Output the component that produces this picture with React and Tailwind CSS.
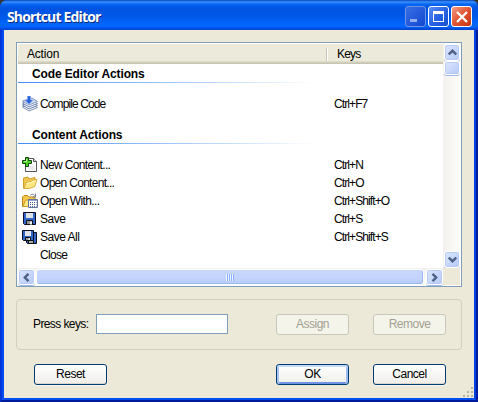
import React from 'react';

const Chevron = ({ className = '' }) => (
  <svg width="9" height="7" viewBox="0 0 9 7" className={className} fill="none" stroke="#4d6185" strokeWidth="2.4">
    <path d="M.8 5.5 4.5 1.8 8.2 5.5" />
  </svg>
);

const scrollBtn = 'flex shrink-0 items-center justify-center rounded-[3px] border border-white bg-linear-to-br from-[#dce6ff] to-[#b5c9f7] shadow-[inset_0_0_0_1px_#b9cbf3,0_1px_0_#9db9e8]';

const icons = {
  compile: (
    <>
      <path d="M.5 11 7 15 15.5 11.5 9 8z" fill="#fff" stroke="#7c8fb5" />
      <path d="M.5 9 7 13 15.5 9.5 9 6z" fill="#fff" stroke="#667da8" />
      <path d="M.5 7 7 11 15.5 7.5 9 4z" fill="#eef3fc" stroke="#7188b3" />
      <path d="M.5 5 7 9 15.5 5.5 10 2z" fill="#cbd8f0" stroke="#8b9dc2" />
      <path d="M5.5 0h3v4H11L7 8 3 4h2.5z" fill="#2863d9" stroke="#80a9f4" strokeWidth=".5" />
    </>
  ),
  create: (
    <>
      <path d="M3.5 1.5h8l3 3v10h-11z" fill="#fff" stroke="#555" />
      <path d="M11.5 1.5v3h3" fill="#ddd" stroke="#555" />
      <path d="M6 12h7M6 10h7" stroke="#d5d9df" />
      <path d="M3.5.5h3v3h3v3h-3v3h-3v-3h-3v-3h3z" fill="#4bd129" stroke="#12430d" />
      <path d="M4.5 2v2.5H2" stroke="#b1f58e" fill="none" />
    </>
  ),
  folder: (
    <>
      <path d="M1.5 13.5V3L6 2l1 2 6-1.5v4" fill="#f0c64e" stroke="#cf9e2b" />
      <path d="M2 13.5 4 7.5 9 6.5l1-1.2 5-.8-2.3 7L7 13.5z" fill="#ffe781" stroke="#dcae3c" />
      <path d="M4.7 8.5 9.4 7.5l1-1 3.3-.5" stroke="#fff9cc" fill="none" />
    </>
  ),
  openWith: (
    <>
      <path d="M.5 13.5V4L2 2.5h3.5L7 4h6v5H4z" fill="#f4c74c" stroke="#bd8a19" />
      <path d="M1 13.5 3.5 7H12v6.5H2z" fill="#ffe781" stroke="#cf9e2b" />
      <path d="M8 2.5C10 .5 12 1 13 3m.5-2.5V4H10.5" fill="none" stroke="#788095" />
      <path d="M6.5 6.5h9v8h-9z" fill="#fff" stroke="#63749b" />
      <path d="M7 7.5h8" stroke="#91a8db" />
      <path d="M8 9.5h6.5M8 11.5h6.5M8 13.4h6.5" stroke="#405787" strokeDasharray="1 1" />
    </>
  ),
  save: (
    <>
      <path d="M1.5 1.5h12v12h-11l-1-1z" fill="#3265c8" stroke="#080f23" />
      <path d="M4 2h7v5H4z" fill="#dfe3e5" />
      <path d="M4.5 9.5h6v4h-6z" fill="#929795" stroke="#111" />
      <path d="M8 10.5h2v3H8z" fill="#eee" />
    </>
  ),
  saveAll: (
    <>
      <path d="M4.5 3.5h10v11h-9l-1-1z" fill="#3265c8" stroke="#080f23" />
      <path d="M6.5 11.5h5v3h-5z" fill="#aaa" stroke="#111" />
      <path d="M.5 1.5h11v10h-10l-1-1z" fill="#3265c8" stroke="#080f23" />
      <path d="M3 2h6v5H3z" fill="#dfe3e5" />
      <path d="M3.5 8.5h5v3h-5z" fill="#929795" stroke="#111" />
      <path d="M6.5 9h1.5v2H6.5z" fill="#eee" />
    </>
  ),
};

function Row({ icon, label, keys, tracking = '' }) {
  return (
    <div className="flex h-[18px] items-center pl-1 leading-[18px]">
      <svg width="16" height="16" viewBox="0 0 16 16" className="mr-[2px] shrink-0" fill="none">{icon && icons[icon]}</svg>
      <span className={'w-[294px] ' + tracking}>{label}</span>
      <span className="tracking-[-0.9px]">{keys}</span>
    </div>
  );
}

function Group({ children }) {
  return (
    <div className="h-[19px] shrink-0">
      <div className="h-[18px] pl-[14px] pt-px text-[12px] leading-[18px] font-bold tracking-[-0.12px]">{children}</div>
      <div className="h-px w-[296px] bg-linear-to-r from-[#3f8cf5] via-[#9cc4fa] to-white" />
    </div>
  );
}

function Button({ children, disabled, primary }) {
  const look = disabled
    ? 'border-[#c9c7ba] bg-[#f5f4ea] text-[#a1a192]'
    : primary
      ? 'border-[#003c74] bg-linear-to-b from-white to-[#efefea] shadow-[inset_0_2px_0_#c5dbfb,inset_2px_0_0_#a9c5f2,inset_-2px_0_0_#a0bcee,inset_0_-2px_0_#6f92e3]'
      : 'border-[#003c74] bg-linear-to-b from-white to-[#efeeea] shadow-[inset_0_-1px_0_#dcd7cc,0_1px_0_#f7f5ee]';
  return (
    <button disabled={disabled} className={'h-[21px] w-[73px] shrink-0 rounded-[3px] border text-center leading-[19px] ' + look}>
      {children}
    </button>
  );
}

const caption = 'flex size-[21px] items-center justify-center rounded-[3px] border';

export default function App() {
  return (
    <div className="h-[402px] w-[478px] overflow-hidden bg-[#333]">
      <div className="flex h-[402px] w-[478px] flex-col overflow-hidden rounded-t-[7px] bg-[#0831d9] font-['Liberation_Sans',Arial,sans-serif] text-[12px] tracking-[-0.5px] text-black">
        <div className="flex h-[30px] shrink-0 items-center justify-between bg-[linear-gradient(to_bottom,#0848bc_0,#3b91ff_2px,#0a68f5_4px,#0053e1_8px,#0057e7_16px,#0267ff_25px,#0061fa_27px,#0040c9_30px)] pt-[3px] pr-[6px] pl-[7px]">
          <span className="font-['Open_Sans','Noto_Sans',sans-serif] text-[14px] leading-[18px] font-bold tracking-[-0.85px] text-white [text-shadow:1px_1px_0_#0b2b80]">Shortcut Editor</span>
          <div className="flex gap-[2px]">
            <div className={caption + ' border-[#6f95e8] bg-linear-to-br from-[#386ee5] to-[#1147cf]'}>
              <span className="mt-[8px] mr-[4px] h-[3px] w-[7px] bg-[#93adf0]" />
            </div>
            <div className={caption + ' border-white bg-linear-to-br from-[#5b8ef5] via-[#2863e4] to-[#1252cf]'}>
              <span className="size-[11px] border border-t-[3px] border-white" />
            </div>
            <div className={caption + ' border-white bg-linear-to-br from-[#f09a80] via-[#e25331] to-[#c13510]'}>
              <svg width="12" height="12" viewBox="0 0 12 12" stroke="white" strokeWidth="2.3"><path d="m1 1 10 10M11 1 1 11" /></svg>
            </div>
          </div>
        </div>

        <div className="flex grow flex-col border-x-2 border-b-2 border-[#001b9c] [border-left-color:#0033d8]">
          <div className="flex grow flex-col border-x-2 border-b-2 border-[#004df0] [border-right-color:#0040e0] bg-[#ece9d8] px-3 pt-3">
            <div className="flex h-[245px] w-[446px] shrink-0 flex-col border border-[#7f9db9] bg-white p-px">
              <div className="flex h-[224px]">
                <div className="flex w-[425px] flex-col">
                  <div className="flex h-5 shrink-0 items-center bg-[linear-gradient(to_bottom,#ebeadb_17px,#dedbcb_17px,#dedbcb_18px,#d2cebe_18px,#d2cebe_19px,#c7c5b2_19px)] pl-[9px] text-[12px] leading-5 tracking-[-0.2px]">
                    <span className="w-[299px]">Action</span>
                    <span className="h-[13px] w-[2px] border-l border-r border-l-[#c7c5b2] border-r-white" />
                    <span className="pl-[9px] tracking-[-0.8px]">Keys</span>
                  </div>
                  <Group>Code Editor Actions</Group>
                  <div className="h-[12px]" />
                  <Row icon="compile" label="Compile Code" keys="Ctrl+F7" tracking="tracking-[-0.9px]" />
                  <div className="h-[12px]" />
                  <Group>Content Actions</Group>
                  <div className="h-[12px]" />
                  <Row icon="create" label="New Content..." keys="Ctrl+N" tracking="tracking-[-0.65px]" />
                  <Row icon="folder" label="Open Content..." keys="Ctrl+O" tracking="tracking-[-0.7px]" />
                  <Row icon="openWith" label="Open With..." keys="Ctrl+Shift+O" tracking="tracking-[-0.6px]" />
                  <Row icon="save" label="Save" keys="Ctrl+S" />
                  <Row icon="saveAll" label="Save All" keys="Ctrl+Shift+S" />
                  <Row label="Close" keys="" tracking="tracking-[-0.7px]" />
                </div>
                <div className="flex w-[17px] flex-col items-end bg-linear-to-r from-[#f2f0ed] to-[#fefefb]">
                  <div className={scrollBtn + ' h-[17px] w-[16px]'}><Chevron /></div>
                  <div className={scrollBtn + ' h-[14px] w-[16px]'} />
                  <div className="grow" />
                  <div className={scrollBtn + ' h-[17px] w-[16px]'}><Chevron className="rotate-180" /></div>
                </div>
              </div>
              <div className="flex h-[17px] bg-[#ece9d8]">
                <div className="flex w-[425px] items-end justify-between bg-linear-to-b from-[#f2f0ed] to-[#fefefb]">
                  <div className={scrollBtn + ' h-4 w-[17px]'}><Chevron className="-rotate-90" /></div>
                  <div className="ml-px flex h-4 w-[388px] items-center justify-center rounded-[3px] border border-white bg-linear-to-b from-[#c6d6fd] via-[#c5d4fc] to-[#b6cafa] shadow-[inset_-1px_-1px_0_#9db9f0]">
                    <div className="h-[7px] w-2 bg-[repeating-linear-gradient(to_right,#edf4ff_0,#edf4ff_1px,#8cb0f8_1px,#8cb0f8_2px)]" />
                  </div>
                  <div className={scrollBtn + ' ml-auto h-4 w-[17px]'}><Chevron className="rotate-90" /></div>
                </div>
              </div>
            </div>

            <div className="mt-3 flex h-[51px] w-[446px] shrink-0 items-center rounded-[4px] border border-[#d0d0bf] pb-px pl-[16px]">
              <span className="w-[63px] tracking-[-0.6px]">Press keys:</span>
              <input aria-label="Press keys" className="mr-12 h-5 w-[132px] border border-[#7f9db9] bg-white" />
              <Button disabled>Assign</Button>
              <div className="w-6" />
              <Button disabled>Remove</Button>
            </div>

            <div className="mt-[14px] flex h-[34px] shrink-0 pl-[18px]">
              <Button>Reset</Button>
              <div className="w-[169px] shrink-0" />
              <Button primary>OK</Button>
              <div className="w-6 shrink-0" />
              <Button>Cancel</Button>
              <svg width="12" height="12" viewBox="0 0 12 12" className="mt-auto ml-[16px] shrink-0" fill="#b8b4a2">
                <path d="M9 1h2v2H9zM9 5h2v2H9zM5 5h2v2H5zM9 9h2v2H9zM5 9h2v2H5zM1 9h2v2H1z" />
              </svg>
            </div>
          </div>
        </div>
      </div>
    </div>
  );
}
